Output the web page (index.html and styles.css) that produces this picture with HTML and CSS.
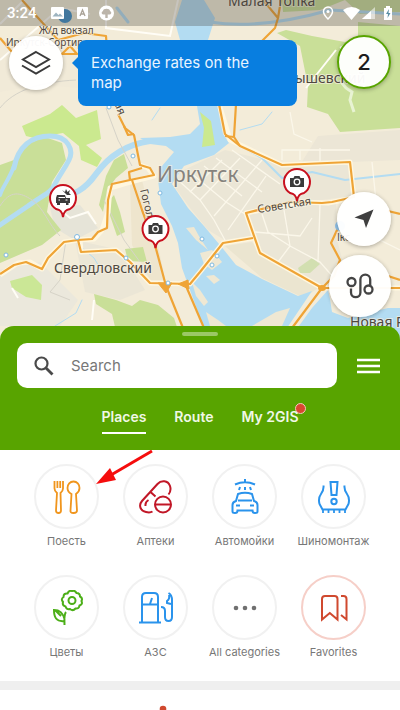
FILE: index.html
```
<!DOCTYPE html>
<html lang="ru">
<head>
    <meta charset="UTF-8">
    <meta name="viewport" content="width=device-width, initial-scale=1.0">
    <title>2GIS</title>
    <link rel="stylesheet" href="styles.css">
</head>
<body>
    <div class="map">
        <svg class="map-canvas" viewBox="0 0 400 340" aria-hidden="true">
            <rect width="400" height="340" fill="#f3ecd9"/>

            <!-- districts -->
            <g fill="#ebe6d6">
                <path d="M0 92 40 85 78 88V40H0Z" fill="#f1ead8"/>
                <path d="M50 208 80 205 98 228 75 240 55 228Z" fill="#e6e4d8"/>
                <path d="M0 270 40 262 78 300 60 326H0Z" fill="#ebe8dc"/>
                <path d="M75 240 120 250 145 290 120 300 85 292Z"/>
                <path d="M130 185 142 180 157 240 165 280 150 280 132 245Z" fill="#eee5cd"/>
                <path d="M180 172 225 150 285 165 350 165 352 196 300 203 247 214 255 238 228 242 208 230 190 208 174 186Z"/>
                <path d="M247 214 300 203 336 202 337 240 345 270 322 288 260 253Z"/>
                <path d="M318 136 400 130V160L350 162 300 165Z" fill="#ece6d6"/>
                <path d="M225 246 252 242 264 256 318 288 304 298 262 278Z" fill="#ebe5d0"/>
            </g>

            <!-- parks -->
            <g fill="#c9df98">
                <path d="M22 126 50 114 62 105 76 118 97 110 101 139 86 145 102 158 97 167 81 160 79 146 63 133 34 138 26 136Z" fill="#cbe98f"/>
                <path d="M0 165 14 160 22 146 45 137 62 143 66 160 52 182 47 212 53 220 61 230 42 245 0 263Z"/>
                <path d="M106 176 114 160 124 154 128 168 116 178 107 190 103 212 99 205Z"/>
                <path d="M106 204 114 195 120 212 125 232 117 236Z"/>
                <path d="M125 249 143 247 147 262 128 261Z"/>
                <path d="M10 281 32 275 42 285 41 300 26 297 12 288Z" fill="#cbe796"/>
                <path d="M94 294 116 300 132 306 140 300 158 305 174 318 178 330V340H118L112 314 96 304Z"/>
                <path d="M277 33 286 30 312 36 345 42 358 36V22L400 26V128L340 132 328 114 307 107 308 86 300 46Z"/>
                <path d="M282 0H345L320 10 283 12Z"/>
                <path d="M345 0H400V12L360 14Z" fill="#cbdb9c"/>
                <path d="M298 268 312 258 320 264 310 273 300 273Z" fill="#d2dfb0"/>
            </g>

            <!-- water -->
            <g fill="#b3dcf2">
                <path d="M182 0H204L215 18 208 40H180L175 22Z"/>
                <path d="M196 100H216L223 134 229 143 214 155 184 166 172 184 188 208 204 226 224 250 236 265 262 279 298 296 312 291 287 328V340H208L190 290 182 268 178 243 172 226 161 204 158 180 162 166 174 152 166 146 150 144 140 138 170 137 190 134 200 124Z"/>
                <path d="M328 290 312 308 296 330V340H400V308L388 308 348 318 332 312 330 299Z"/>
            </g>
            <path d="M200 112 211 121 215 145 202 147 204 128Z" fill="#cbe98f"/>
            <g fill="none" stroke="#b3dcf2" stroke-linecap="round" stroke-linejoin="round">
                <path d="M14 168C18 146 32 136 50 136S74 150 69 160 60 174 55 184 44 194 28 206L0 225" stroke-width="5"/>
                <path d="M14 166C10 178 3 186 0 195" stroke-width="4"/>
                <path d="M52 196C74 198 86 188 96 174S122 145 150 141" stroke-width="6"/>
                <path d="M80 246 94 258 100 268M82 300 76 313 55 326" stroke-width="1"/>
                <path d="M233 142 262 158 282 178 312 172 345 180 400 174" stroke-width="2"/>
                <path d="M240 130 262 124 272 112M152 120 160 108" stroke-width="1"/>
                <path d="M117 8 128 22M210 22Q260 30 330 10L400 14" stroke-width="3"/>
            </g>
            <g fill="#efe8d3">
                <path d="M186 228 194 227 200 238 208 250 196 240Z"/>
                <path d="M200 253 212 250 222 262 212 270 204 264Z"/>
                <path d="M206 276 214 275 220 280 214 284Z"/>
                <path d="M192 282 200 290 208 302 204 306 196 296Z"/>
                <path d="M206 312 218 320 226 326 210 326Z"/>
                <path d="M252 326 276 312 290 308 282 326Z"/>
            </g>

            <!-- minor streets -->
            <g fill="none" stroke="#fffdf6" stroke-width="2">
                <path d="M106 0V28L170 36 178 0M0 24 24 0M0 60 60 8 90 14"/>
                <path d="M58 208 70 218 88 212 96 224M12 288 18 298M94 300 92 320"/>
                <path d="M306 88 336 50M340 48 352 42"/>
            </g>
            <g fill="none" stroke="#fbf7ea" stroke-width="1.300">
                <path d="M178 180 200 200 214 220 226 242M192 174 226 202 248 216M204 166 242 196M216 158 262 192M232 150 280 184"/>
                <path d="M200 200 240 158M190 192 222 160M214 216 262 160M228 230 266 176"/>
                <path d="M262 214 268 232 290 246 320 262 334 278M255 232 300 236 312 218M284 210 290 246 278 262M320 205 318 262"/>
                <path d="M290 112 294 134 312 142M282 160V150H350M300 150V160M320 148V162M372 162 380 240 400 250"/>
            </g>
            <g fill="none" stroke="#d6d3c8" stroke-width="1">
                <path d="M0 108C14 90 40 82 76 80M0 206C10 190 20 192 32 200S48 224 60 236M66 240 60 280 50 292 70 300M104 200 124 240 140 262"/>
                <path d="M106 108 118 140 132 166"/>
            </g>
            <path d="M342 83 346 88 352 92 350 100 354 112" fill="none" stroke="#e8f3d3" stroke-width="3"/>

            <!-- highways -->
            <g fill="none" stroke="#fff7df" stroke-width="5" stroke-linejoin="round">
                <path d="M0 275 18 263 30 262 42 269 48 258 64 242 78 240 94 239 102 230 108 212 110 188 130 182 154 176 148 168 140 165"/>
                <path d="M80 240 81 252 116 250 130 262 150 283 190 284 200 272 223 243 253 238"/>
                <path d="M400 288H322L260 253 246 213 300 202 328 203 354 198 350 162 282 165 230 140 220 107"/>
            </g>
            <g fill="none" stroke="#efa436" stroke-width="2.200" stroke-linejoin="round">
                <path d="M22 0 58 40 84 33 106 36 107 50M0 38 12 52M62 54 70 46 77 54Z"/>
                <path d="M118 114 125 128 134 135 137 150 140 165 150 168 154 175 130 180 129 172 142 168"/>
                <path d="M124 126 128 135 134 134"/>
                <path d="M0 274 14 265 26 262 42 269 48 258 64 242 78 240 92 239 98 232 107 228 108 200 112 184 130 180"/>
                <path d="M78 240 81 252 116 250 130 262 150 283 190 284 200 272 223 243 253 238"/>
                <path d="M132 180 142 210 155 245 166 286 183 328M186 286 204 328"/>
                <path d="M219 104 225 134 240 146 282 165 350 162 354 197 332 202 322 203 290 202 246 213 260 253 322 288H400"/>
                <path d="M236 104 234 137 240 146M225 136 234 137"/>
                <path d="M263 0 278 18 275 28 262 41M281 0 278 18"/>
                <path d="M322 288 292 328M322 288 334 276 340 260 331 243 338 228M388 211 400 214M388 276 400 280"/>
            </g>
            <path d="M158 283H172L166 293ZM178 284 188 280 189 289Z" fill="#efa436" stroke="#efa436" stroke-width="1"/>
            <ellipse cx="322" cy="288" rx="4" ry="3" fill="#efa436"/>
            <g fill="#fff" stroke="#7fb9e0" stroke-width="1">
                <circle cx="6" cy="255" r="2"/>
                <circle cx="77" cy="237" r="2.500"/>
                <circle cx="126" cy="258" r="2"/>
                <circle cx="168" cy="283" r="2"/>
                <circle cx="160" cy="193" r="2"/>
                <circle cx="202" cy="239" r="2"/>
                <circle cx="217" cy="256" r="2"/>
                <circle cx="212" cy="265" r="2"/>
                <circle cx="133" cy="156" r="2"/>
                <circle cx="109" cy="107" r="2"/>
            </g>
            <circle cx="65" cy="16" r="7" fill="#3f8fc9"/>
            <circle cx="340" cy="226" r="5" fill="#8fc0e6"/>

            <!-- place names -->
            <g class="place">
                <text x="228" y="6" class="place-md">Малая Топка</text>
                <text x="39" y="34" class="place-sm">Ж/д вокзал</text>
                <text x="6" y="46" class="place-sm">Иркутск-Сортир</text>
                <text x="287" y="83" class="place-md">вышевский</text>
                <text x="157" y="182" class="place-lg">Иркутск</text>
                <text x="54" y="273" class="place-md">Свердловский</text>
                <text x="350" y="327" class="place-md">Новая Р</text>
                <text x="337" y="241" class="place-sm">Ікс</text>
                <text class="place-street" transform="translate(258 213) rotate(-9)">Советская</text>
                <text class="place-street" transform="translate(140 190) rotate(76)">Гоголя</text>
                <text class="place-street" transform="translate(95 56) rotate(68)">Маяковская</text>
            </g>

            <!-- traffic pins -->
            <g fill="#fff" stroke="#c8101e" stroke-width="2">
                <path d="M63 217C62 211 60 210 56 209A13 13 0 1 1 70 209C66 210 64 211 63 217Z"/>
                <path d="M155.500 248C154.500 242 152.500 241 148.500 240A13 13 0 1 1 162.500 240C158.500 241 156.500 242 155.500 248Z"/>
                <path d="M297 201C296 195 294 194 290 193A13 13 0 1 1 304 193C300 194 298 195 297 201Z"/>
            </g>
            <g fill="#3b3b3b">
                <path d="M57 195H65L66 198H70V203H68.500V205H66V203H60V205H57V203H56V198Z"/>
                <path d="M62 190 65 192 66 189 67.500 192 70 190 69 193 71 195H67Z"/>
                <path d="M148.500 225H152L153 223H158L159 225H162.500V234H148.500Z"/>
                <path d="M290 178H293.500L294.500 176H299.500L300.500 178H304V187H290Z"/>
            </g>
            <g fill="#3b3b3b" stroke="#fff" stroke-width="1.300">
                <circle cx="155.500" cy="229" r="2.800"/>
                <circle cx="297" cy="182" r="2.800"/>
            </g>
            <path d="M58.500 200H60M65.500 200H67.500M58.500 197.500H65" stroke="#fff" stroke-width="1"/>
        </svg>

        <div class="status-bar">
            <span class="clock">3:24</span>
            <svg class="status-notes" width="64" height="16" viewBox="0 0 64 16" aria-hidden="true">
                <rect y="2" width="13" height="12" rx="1" fill="#fff"/>
                <path d="M1.500 11.500 5 7.500 7.500 10 9 8.500 12 11.500Z" fill="#9db4c0"/>
                <rect x="26" y="2" width="11" height="12" rx="1" fill="#fff"/>
                <path d="M29 11 31.500 5 34 11M30 9H33" fill="none" stroke="#aaa398" stroke-width="1.300"/>
                <circle cx="55.500" cy="8" r="7.500" fill="#fff"/>
                <path d="M54.300 13V9.500C50 10 50 7 52 6 52 3 59 3 59 6 61 7 61 10 56.700 9.500V13Z" fill="#bcb5aa"/>
            </svg>
            <svg class="status-system" width="72" height="16" viewBox="0 0 72 16" aria-hidden="true">
                <path d="M7 2A4.500 4.500 0 0 1 11.500 6.500C11.500 9.500 7 14 7 14S2.500 9.500 2.500 6.500A4.500 4.500 0 0 1 7 2Z" fill="none" stroke="#fff" stroke-width="1.500"/>
                <circle cx="7" cy="6.500" r="1.500" fill="#fff"/>
                <path d="M22 5Q30.500-1 39 5L30.500 15Z" fill="#fff"/>
                <path d="M54 2V14H41Z" fill="#fff" opacity="0.550"/>
                <path d="M50 6V14H41Z" fill="#fff"/>
                <path d="M63 3H65V1H69V3H71V15H63Z" fill="#fff"/>
                <path d="M68 4 65 9H67L66.500 13 69.500 8H67.500Z" fill="#5b8fa5"/>
            </svg>
        </div>

        <button class="round-btn layers-btn" type="button" aria-label="Layers">
            <svg width="30" height="26" viewBox="0 0 30 26" fill="none" stroke="#3a3a3a" stroke-width="2">
                <path d="M15 2 28 9.500 15 17 2 9.500Z"/>
                <path d="M1 15.500 15 23.500 29 15.500"/>
            </svg>
        </button>
        <div class="tooltip">Exchange rates on the map</div>
        <button class="round-btn traffic-btn" type="button" aria-label="Traffic">2</button>
        <button class="round-btn locate-btn" type="button" aria-label="My location">
            <svg width="20" height="20" viewBox="0 0 20 20">
                <path d="M19.500.500 12 19 9.500 11 .500 8.500Z" fill="#3f3f3f"/>
            </svg>
        </button>
        <button class="round-btn route-btn" type="button" aria-label="Directions">
            <svg width="28" height="26" viewBox="0 0 28 26" fill="none" stroke="#444" stroke-width="2.300">
                <circle cx="5.500" cy="9" r="4"/>
                <circle cx="22.500" cy="16.500" r="4"/>
                <path d="M5 15.500V19.500A4.700 4.700 0 0 0 14.400 19.500V6.500A4.900 4.900 0 0 1 24.200 6.500V12.500"/>
            </svg>
        </button>
    </div>

    <div class="sheet">
        <div class="handle"></div>
        <div class="search-row">
            <label class="search-box">
                <svg width="20" height="20" viewBox="0 0 20 20" fill="none" stroke="#4a4a4a">
                    <circle cx="7.500" cy="7.500" r="6" stroke-width="2.200"/>
                    <path d="M12 12 18.500 18.500" stroke-width="2.800"/>
                </svg>
                <input class="search-input" type="text" placeholder="Search" aria-label="Search">
            </label>
            <button class="menu-btn" type="button" aria-label="Menu">
                <svg width="23" height="16" viewBox="0 0 23 16" stroke="#fff" stroke-width="2.300">
                    <path d="M0 2H23M0 8H23M0 14H23"/>
                </svg>
            </button>
        </div>
        <div class="tabs">
            <button class="tab tab-active" type="button">Places</button>
            <button class="tab" type="button">Route</button>
            <button class="tab tab-new" type="button">My 2GIS</button>
        </div>
    </div>

    <div class="categories">
        <a class="category" href="#">
            <span class="category-icon">
                <svg width="36" height="36" viewBox="0 0 36 36" fill="none" stroke="#f0951d" stroke-width="1.800">
                    <path d="M5.500 2V9.500Q5.500 12 8 14L7 31.500Q7 34 9.500 34T12 31.500L11.500 14Q14 12 14 9.500V2M8.400 2V9M11.200 2V9"/>
                    <path d="M24.500 2.500C28 2.500 30.500 5.500 30.500 9 30.500 12 28.500 14 27 15L28 31.500Q28 34 24.500 34T21.500 31.500L22.500 15C20.500 14 18.500 12 18.500 9 18.500 5.500 21 2.500 24.500 2.500Z"/>
                </svg>
            </span>
            <span class="category-name">Поесть</span>
        </a>
        <a class="category" href="#">
            <span class="category-icon">
                <svg width="36" height="36" viewBox="0 0 36 36" fill="none" stroke="#c11727" stroke-width="2">
                    <path d="M14.500 32.500Q12 34 8 33C2 32 .500 26 4 22L19.500 5C23 1 30 1 32 7 33 10 32.500 13 30.500 15.500M12.500 13 17.500 17.500M7.500 27Q7 23 10.500 21"/>
                    <circle cx="25" cy="25.500" r="8"/>
                    <path d="M17 25.500H33"/>
                </svg>
            </span>
            <span class="category-name">Аптеки</span>
        </a>
        <a class="category" href="#">
            <span class="category-icon">
                <svg width="36" height="36" viewBox="0 0 36 36" fill="none" stroke="#2a93ec" stroke-width="2">
                    <path d="M8 5.500Q18 1 28 5.500M18 0V3M13 8 12 11M18 8V11M23 8 24 11"/>
                    <path d="M9 22 11 15Q18 12.500 25 15L27 22Q30.500 23 30.500 26V32.500Q30.500 34 28 34T25.500 31.500H10.500Q10.500 34 8 34T5.500 32.500V26Q5.500 23 9 22ZM11 21.500H25M9 26.500H13M23 26.500H27"/>
                </svg>
            </span>
            <span class="category-name">Автомойки</span>
        </a>
        <a class="category" href="#">
            <span class="category-icon">
                <svg width="36" height="36" viewBox="0 0 36 36" fill="none" stroke="#2a93ec" stroke-width="2">
                    <path d="M7.500 6.500Q8 11 5 15T3.500 25L6.500 30.500H29.500L32.500 25Q34 19 31 15T28.500 6.500"/>
                    <path d="M7 30V34M12.500 30V34M18 30V34M23.500 30V34M29 30V34" stroke-width="1.800"/>
                    <path d="M14.500 3H21.500L20.500 16H15.500Z"/>
                    <circle cx="18" cy="22.500" r="2.700"/>
                </svg>
            </span>
            <span class="category-name">Шиномонтаж</span>
        </a>
        <a class="category" href="#">
            <span class="category-icon">
                <svg width="36" height="36" viewBox="0 0 36 36" fill="none" stroke="#4caf18" stroke-width="2">
                    <path d="M23 1Q26 0 27.500 3 31 3 31 6.500 34 8 32.500 11 34 14.500 30.500 15.500 30 19 26.500 18.500 24 21.500 21 19 17.500 20 16.500 16.500 13 15.500 14 12 11.500 9 14.500 7 14.500 3 18.500 3.500 20 0 23 1Z"/>
                    <circle cx="23" cy="10.500" r="3.500"/>
                    <path d="M17 22Q15 24 15.500 35M15.500 31C7 32 5 27 5 20 11 20 14 23 15.500 29M6 20 12 26"/>
                </svg>
            </span>
            <span class="category-name">Цветы</span>
        </a>
        <a class="category" href="#">
            <span class="category-icon">
                <svg width="36" height="36" viewBox="0 0 36 36" fill="none" stroke="#2a93ec" stroke-width="2">
                    <path d="M1 32.500H23M4 32V7Q4 3 8 3H16Q20 3 20 7V32M4 14.500H20M12 14 14 8"/>
                    <path d="M30.500 3Q34 5 34 10V27Q34 31 30.500 31T27 27V21Q27 17 23 17M31 5Q32 9 29 11V13L33 14"/>
                </svg>
            </span>
            <span class="category-name">АЗС</span>
        </a>
        <a class="category" href="#">
            <span class="category-icon">
                <svg width="36" height="36" viewBox="0 0 36 36" fill="#707070">
                    <circle cx="9" cy="18" r="2.300"/>
                    <circle cx="18" cy="18" r="2.300"/>
                    <circle cx="27" cy="18" r="2.300"/>
                </svg>
            </span>
            <span class="category-name">All categories</span>
        </a>
        <a class="category" href="#">
            <span class="category-icon category-icon-fav">
                <svg width="36" height="36" viewBox="0 0 36 36" fill="none" stroke="#d0492f" stroke-width="2">
                    <path d="M6 29.500V9Q6 6 9 6H18.500Q21.500 6 21.500 9V29.500L13.800 23Z"/>
                    <path d="M25 6H27.500Q30.500 6 30.500 9V29.500L25 25"/>
                </svg>
            </span>
            <span class="category-name">Favorites</span>
        </a>
        <svg class="arrow" width="60" height="38" viewBox="0 0 60 38" aria-hidden="true">
            <path d="M57 3 16 27" stroke="#f50d0d" stroke-width="3"/>
            <path d="M1 36 15 20 21 32Z" fill="#f50d0d"/>
        </svg>
    </div>

    <div class="next-card">
        <svg width="8" height="5" viewBox="0 0 8 5" aria-hidden="true">
            <circle cx="4" cy="4" r="3.300" fill="#d0492f"/>
        </svg>
    </div>
</body>
</html>
```
FILE: styles.css
```
* {
    box-sizing: border-box;
}

body {
    margin: 0;
    font-family: Inter, Roboto, sans-serif;
    background-color: #fff;
    overflow-x: hidden;
}

button {
    padding: 0;
    border: none;
    background: none;
    font-family: inherit;
    cursor: pointer;
}

svg {
    display: block;
}

/* map */
.map {
    position: relative;
    overflow: hidden;
}

.map-canvas {
    width: 100%;
    height: auto;
}

.place {
    font-family: "Noto Sans", sans-serif;
    fill: #4f4840;
    stroke: rgba(246, 241, 226, 0.7);
    stroke-width: 2px;
    paint-order: stroke;
}

.place-sm {
    font-size: 10px;
}

.place-md {
    font-size: 14px;
}

.place-lg {
    font-size: 21px;
    fill: #85827d;
}

.place-street {
    font-size: 11px;
}

.status-bar {
    position: absolute;
    top: 0;
    left: 0;
    right: 0;
    height: 26px;
    padding: 0 7px;
    display: flex;
    align-items: center;
    background-color: rgba(70, 65, 60, 0.3);
    color: #fff;
}

.clock {
    font-family: Roboto, sans-serif;
    font-size: 15px;
    font-weight: 500;
}

.status-notes {
    margin-left: 14px;
}

.status-system {
    margin-left: auto;
}

.round-btn {
    position: absolute;
    display: flex;
    align-items: center;
    justify-content: center;
    width: 54px;
    height: 54px;
    border-radius: 50%;
    background-color: rgba(255, 255, 255, 0.96);
    box-shadow: 0 1px 4px rgba(0, 0, 0, 0.3);
    color: #1c1c1c;
}

.layers-btn {
    top: 36px;
    left: 9px;
}

.traffic-btn {
    top: 35px;
    right: 9px;
    border: 2px solid #58a400;
    font-size: 22px;
    font-weight: 500;
}

.locate-btn {
    top: 192px;
    right: 9px;
}

.route-btn {
    top: 255px;
    right: 9px;
    width: 62px;
    height: 62px;
}

.tooltip {
    position: absolute;
    top: 40px;
    left: 78px;
    width: 219px;
    padding: 13px;
    border-radius: 8px;
    background-color: #087ee0;
    color: #e8f4ff;
    font-size: 15px;
    line-height: 20px;
}

.tooltip::before {
    content: "";
    position: absolute;
    top: 17px;
    left: -6px;
    border: 6px solid transparent;
    border-left-width: 0;
    border-right-color: #087ee0;
}

/* search sheet */
.sheet {
    position: relative;
    margin-top: -14px;
    padding: 6px 17px 16px;
    border-radius: 14px 14px 0 0;
    background-color: #58a400;
}

.handle {
    width: 36px;
    height: 4px;
    margin: 0 auto;
    border-radius: 2px;
    background-color: #9bc866;
}

.search-row {
    display: flex;
    align-items: center;
    gap: 20px;
    margin-top: 7px;
    padding-right: 3px;
}

.search-box {
    flex: 1;
    display: flex;
    align-items: center;
    gap: 17px;
    height: 45px;
    padding: 0 17px;
    border-radius: 10px;
    background-color: #fff;
}

.search-input {
    flex: 1;
    min-width: 0;
    padding: 0;
    border: none;
    outline: none;
    background: none;
    font-family: inherit;
    font-size: 15px;
}

.search-input::placeholder {
    color: #777;
}

.tabs {
    display: flex;
    justify-content: center;
    gap: 28px;
    margin-top: 19px;
}

.tab {
    position: relative;
    padding-bottom: 5px;
    border-bottom: 2px solid transparent;
    color: #f0f8e6;
    font-size: 14px;
    line-height: 20px;
    font-weight: 600;
}

.tab-active {
    border-bottom-color: #fff;
}

.tab-new::after {
    content: "";
    position: absolute;
    top: -4px;
    right: -8px;
    width: 9px;
    height: 9px;
    border: 1px solid #f3c9bd;
    border-radius: 50%;
    background-color: #d9482f;
}

/* categories */
.categories {
    position: relative;
    display: grid;
    grid-template-columns: repeat(4, 1fr);
    row-gap: 26px;
    padding: 14px 22px 21px;
}

.category {
    display: flex;
    flex-direction: column;
    align-items: center;
    gap: 4px;
    color: #777;
    font-size: 11px;
    line-height: 16px;
    text-decoration: none;
    white-space: nowrap;
}

.category-icon {
    display: flex;
    align-items: center;
    justify-content: center;
    width: 65px;
    height: 65px;
    border: 2px solid #f1f1f1;
    border-radius: 50%;
}

.category-icon-fav {
    border-color: #f6cfc8;
}

.arrow {
    position: absolute;
    top: -2px;
    left: 95px;
}

.next-card {
    padding: 15px 159px 0;
    border-top: 9px solid #efefef;
}
```
